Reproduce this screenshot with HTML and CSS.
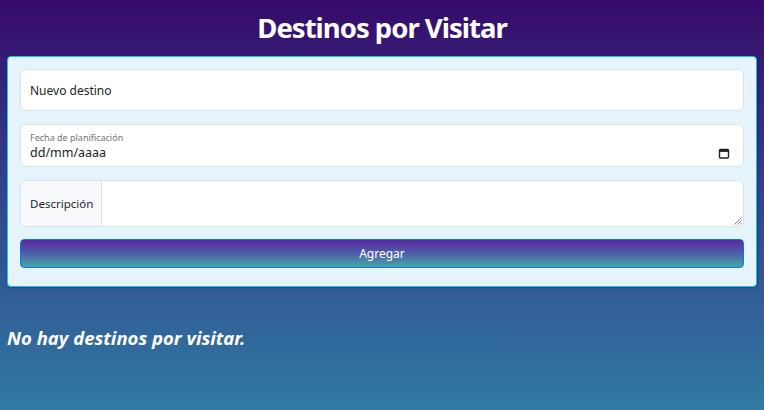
FILE: index.html
```html
<!DOCTYPE html>
<html lang="es">
<head>
<meta charset="utf-8">
<title>Destinos por Visitar</title>
<link rel="stylesheet" href="styles.css">
</head>
<body>
<h1 class="title">Destinos por Visitar</h1>
<form class="card">
  <div class="field">
    <input class="control" type="text" placeholder="Nuevo destino">
  </div>
  <div class="field floating">
    <label class="float-label">Fecha de planificación</label>
    <div class="date-row">
      <span class="date-text">dd/mm/aaaa</span>
      <svg class="cal" width="12" height="12" viewBox="0 0 12 12"><rect x="1.5" y="2.5" width="9" height="8.5" rx="1" fill="none" stroke="#222" stroke-width="1.4"/><rect x="1.5" y="2.5" width="9" height="2.4" fill="#222"/></svg>
    </div>
  </div>
  <div class="group">
    <span class="group-text">Descripción</span>
    <div class="textarea">
      <svg class="grip" width="9" height="9" viewBox="0 0 9 9"><path d="M8.5 1.5L1.5 8.5M8.5 4.5L4.5 8.5M8.5 7.2L7.2 8.5" stroke="#666" stroke-width="0.8"/></svg>
    </div>
  </div>
  <button class="btn" type="button">Agregar</button>
</form>
<p class="empty">No hay destinos por visitar.</p>
</body>
</html>
```

FILE: styles.css
```css
html, body {
  margin: 0;
  padding: 0;
  height: 100%;
}
body {
  font-family: "Noto Sans", "Open Sans", sans-serif;
  background: linear-gradient(180deg, #360a6a 0%, #33418a 45%, #307aa3 100%);
  color: #212529;
  display: flex;
  flex-direction: column;
}
.title {
  margin: 0;
  height: 54px;
  padding-bottom: 2px;
  display: flex;
  align-items: center;
  justify-content: center;
  color: #fff;
  font-size: 27.5px;
  font-weight: 700;
  letter-spacing: -1px;
}
.card {
  margin: 0 7px;
  padding: 12px 12px 18px;
  background: #e6f5fd;
  border: 1px solid #14c6ef;
  border-radius: 4px;
  box-shadow: 1px 1px 2px rgba(0, 0, 0, 0.25);
  display: flex;
  flex-direction: column;
  gap: 13px;
}
.field {
  background: #fff;
  border: 1px solid #dde2e7;
  border-radius: 5px;
  height: 42px;
  box-sizing: border-box;
}
.control {
  width: 100%;
  height: 100%;
  box-sizing: border-box;
  border: 0;
  background: transparent;
  padding: 0 9px;
  font-family: inherit;
  font-size: 12px;
  color: #212529;
  outline: none;
}
.control::placeholder {
  color: #212529;
  opacity: 1;
}
.floating {
  height: 43px;
  padding: 7px 9px 0;
  display: flex;
  flex-direction: column;
}
.float-label {
  font-size: 9px;
  color: #6c757d;
  line-height: 12px;
}
.date-row {
  display: flex;
  align-items: center;
  justify-content: space-between;
  padding-right: 4px;
}
.date-text {
  font-size: 12.5px;
  line-height: 17px;
  color: #212529;
}
.cal {
  display: block;
}
.group {
  display: flex;
  height: 47px;
  box-sizing: border-box;
  border: 1px solid #dde2e7;
  border-radius: 5px;
  background: #fff;
  overflow: hidden;
  margin-bottom: -1px;
}
.group-text {
  width: 81px;
  box-sizing: border-box;
  padding: 0 9px;
  display: flex;
  align-items: center;
  background: #f8f9fa;
  border-right: 1px solid #dde2e7;
  font-size: 11.5px;
  color: #212529;
}
.textarea {
  flex: 1;
  position: relative;
}
.grip {
  position: absolute;
  right: 1px;
  bottom: 1px;
}
.btn {
  height: 29px;
  border: 1px solid #1372f2;
  border-radius: 4px;
  background: linear-gradient(180deg, #5a289e 0%, #4e5fa8 50%, #45a6a5 100%);
  color: #fff;
  font-family: inherit;
  font-size: 12px;
  padding: 0;
}
.empty {
  margin: 38px 7px 0;
  color: #fff;
  font-size: 18.5px;
  font-weight: 700;
  font-style: italic;
}
```
